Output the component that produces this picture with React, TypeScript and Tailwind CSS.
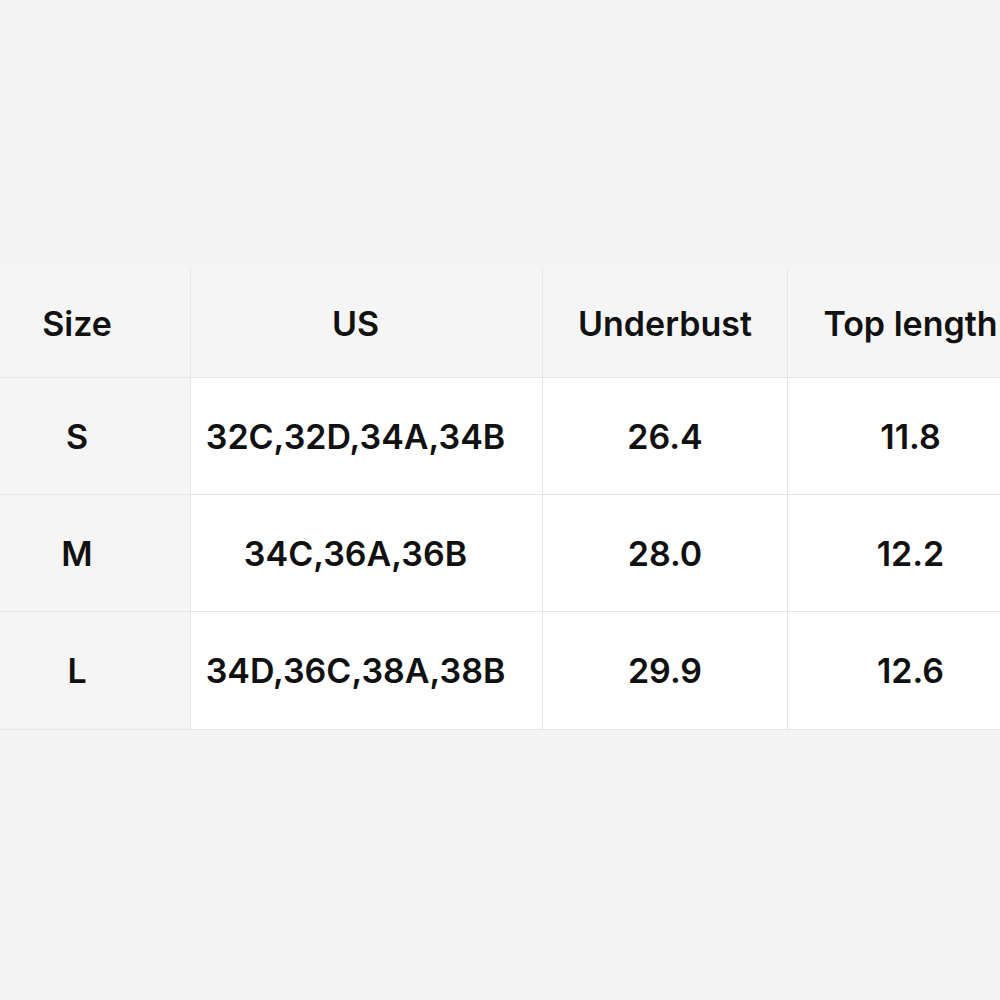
import React from "react";

const header = ["Size", "US", "Underbust", "Top length"];

const rows = [
  ["S", "32C,32D,34A,34B", "26.4", "11.8"],
  ["M", "34C,36A,36B", "28.0", "12.2"],
  ["L", "34D,36C,38A,38B", "29.9", "12.6"],
];

const App = () => {
  return (
    <div
      className="h-[1000px] w-[1000px] overflow-hidden bg-[#f4f4f4] pt-[270px] text-[#111]"
      style={{ fontFamily: "Inter, 'Liberation Sans', sans-serif" }}
    >
      {/* size table */}
      <div className="grid w-[1033px] grid-cols-[190px_352px_245px_246px] border-b border-[#e6e6e6] text-[34px] font-semibold">
        {header.map((title, i) => (
          <div
            key={title}
            className={
              "flex h-[108px] items-center justify-center border-b border-[#e6e6e6] bg-[#f5f5f5] " +
              (i === 0 ? "pr-[36px] " : "border-l ") +
              (i === 1 ? "pr-[22px]" : "")
            }
          >
            {title}
          </div>
        ))}

        {rows.map((row, r) =>
          row.map((cell, i) => (
            <div
              key={r + "-" + i}
              className={
                "flex h-[117px] items-center justify-center " +
                (r < rows.length - 1 ? "border-b border-[#e6e6e6] " : "") +
                (i === 0 ? "bg-[#f5f5f5] pr-[36px] " : "border-l border-[#e6e6e6] bg-white ") +
                (i === 1 ? "pr-[22px]" : "")
              }
            >
              {cell}
            </div>
          ))
        )}
      </div>
    </div>
  );
};

export default App;
